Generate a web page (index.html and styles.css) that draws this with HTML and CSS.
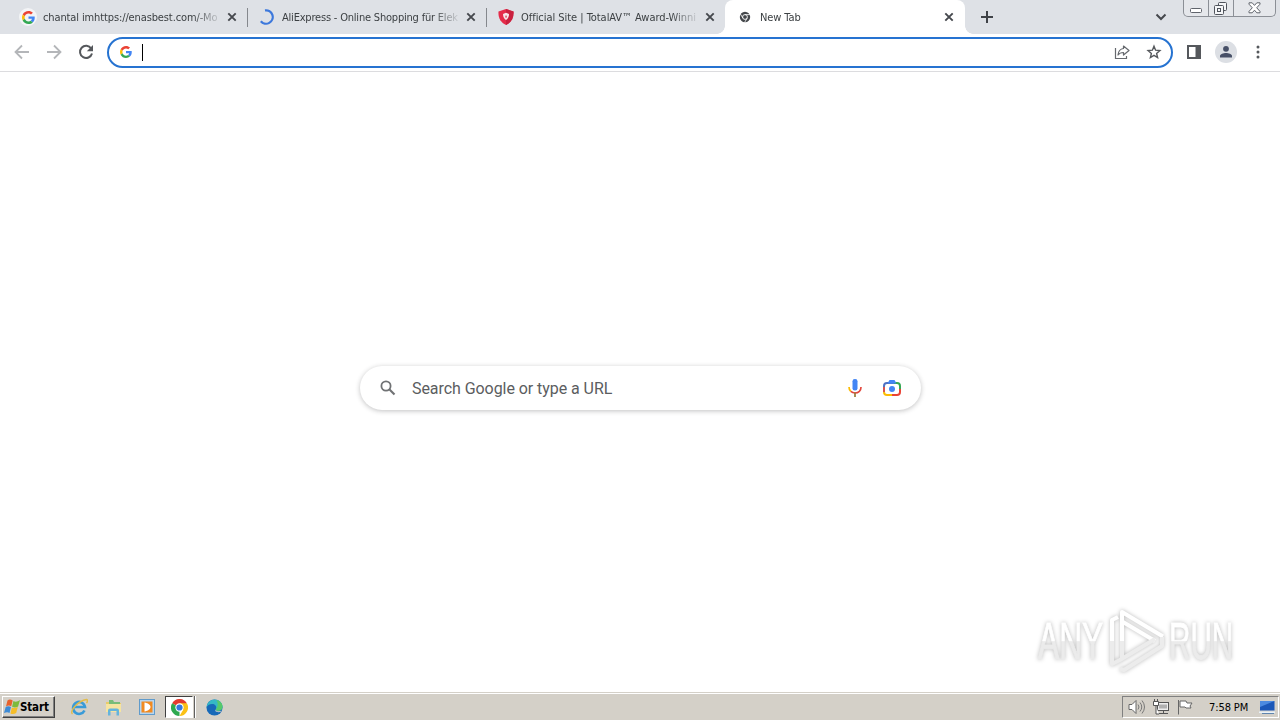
FILE: index.html
```html
<!DOCTYPE html>
<html lang="en">
<head>
  <meta charset="UTF-8">
  <meta name="viewport" content="width=device-width, initial-scale=1.0">
  <title>New Tab</title>
  <link rel="stylesheet" href="styles.css">
</head>
<body>
  <svg class="defs" width="0" height="0">
    <symbol id="google" viewBox="0 0 48 48">
      <path fill="#ea4335" d="M24 9.500c3.500 0 6.700 1.200 9.200 3.600l6.900-6.900C35.900 2.400 30.500 0 24 0 14.600 0 6.500 5.400 2.600 13.200l8 6.200C12.400 13.700 17.700 9.500 24 9.500z"/>
      <path fill="#4285f4" d="M47 24.600c0-1.600-.2-3.100-.4-4.600H24v9h12.900c-.6 3-2.300 5.500-4.800 7.200l7.700 6C44.400 38 47 31.800 47 24.600z"/>
      <path fill="#fbbc05" d="M10.500 28.600c-.5-1.500-.8-3-.8-4.600s.3-3.100.8-4.600l-8-6.200C.9 16.500 0 20.100 0 24s.9 7.500 2.600 10.800z"/>
      <path fill="#34a853" d="M24 48c6.500 0 11.900-2.100 15.900-5.800l-7.700-6c-2.200 1.500-4.900 2.300-8.200 2.300-6.300 0-11.600-4.200-13.500-9.900l-8 6.200C6.500 42.600 14.600 48 24 48z"/>
    </symbol>
    <symbol id="close" viewBox="0 0 10 10">
      <path d="M1.300 1.300l7.400 7.400M8.700 1.300L1.300 8.700" fill="none" stroke="#45484d" stroke-width="1.900"/>
    </symbol>
  </svg>

  <header class="tabs">
    <div class="tab">
      <span class="favicon halo"><svg width="13" height="13"><use href="#google"/></svg></span>
      <span class="title t1">chantal imhttps://enasbest.com/-Mo</span>
      <svg class="close" width="10" height="10"><use href="#close"/></svg>
    </div>
    <div class="tab">
      <span class="favicon"><svg width="16" height="16"><path d="M6 1.400a6.700 6.700 0 1 1-4.200 10.800" fill="none" stroke="#3c78dc" stroke-width="2.200"/></svg></span>
      <span class="title t2">AliExpress - Online Shopping für Elek</span>
      <svg class="close" width="10" height="10"><use href="#close"/></svg>
    </div>
    <div class="tab last">
      <span class="favicon"><svg width="16" height="16" viewBox="0 0 16 16"><path d="M8 0l7.500 2.500c.5 6-2 11-7.500 13.500C2.500 13.500 0 8.500.5 2.500z" fill="#e52b4a"/><path d="M8 0l7.500 2.500c.5 6-2 11-7.500 13.500z" fill="#c9213f"/><path d="M8 3.700l3 1.400c0 2.700-1 4.700-3 6-2-1.300-3-3.300-3-6z" fill="#f7e6ea"/><path d="M7.600 6.500h.9l.3 2H7.300z" fill="#d32544"/></svg></span>
      <span class="title t3">Official Site | TotalAV™ Award-Winni</span>
      <svg class="close" width="10" height="10"><use href="#close"/></svg>
    </div>
    <div class="tab active">
      <span class="favicon"><svg width="12" height="12" viewBox="0 0 12 12"><circle cx="6" cy="6" r="5.200" fill="#44474b"/><circle cx="6" cy="6" r="2.400" fill="#44474b" stroke="#fff" stroke-width=".9"/><path d="M6 3.600h5M3.900 7.200L1.400 3M8.100 7.200L5.600 11.400" stroke="#fff" stroke-width=".8"/></svg></span>
      <span class="title t4">New Tab</span>
      <svg class="close" width="10" height="10"><use href="#close"/></svg>
    </div>
    <svg class="plus" width="12" height="12"><path d="M6 0v12M0 6h12" stroke="#3f4247" stroke-width="2"/></svg>
    <svg class="chevron" width="12" height="8"><path d="M1.500 1.500L6 6l4.500-4.500" fill="none" stroke="#45484d" stroke-width="2"/></svg>
    <div class="window-buttons">
      <span class="min"><svg width="13" height="6"><rect x=".5" y=".5" width="11" height="4" rx="1" fill="#fff" stroke="#60646c"/></svg></span>
      <span class="max"><svg width="14" height="14"><g fill="#f5f6f8" stroke="#50545c"><rect x="4.500" y=".5" width="8" height="8" rx="1"/><rect x=".5" y="3.500" width="9" height="9" rx="1"/><rect x="3.500" y="6.500" width="3" height="3"/></g></svg></span>
      <span class="exit"><svg width="13" height="12"><path d="M1 .8h3.200L6.500 3.400 8.800.8H12v1.400L8.700 5.800 12 9.400v1.400H8.800L6.500 8.200l-2.300 2.600H1V9.400l3.300-3.600L1 2.200z" fill="#fff" stroke="#60646c"/></svg></span>
    </div>
  </header>

  <nav class="toolbar">
    <svg class="nav" width="16" height="16"><path d="M15 8H2M8 1.500L1.500 8 8 14.500" fill="none" stroke="#b4b6b9" stroke-width="1.800"/></svg>
    <svg class="nav" width="16" height="16"><path d="M1 8h13M8 1.500L14.500 8 8 14.500" fill="none" stroke="#b4b6b9" stroke-width="1.800"/></svg>
    <svg class="nav" width="16" height="16"><path d="M13.200 4.500A6.100 6.100 0 1 0 14 9.500" fill="none" stroke="#55585c" stroke-width="2"/><path d="M15 1v6.200H8.800z" fill="#55585c"/></svg>
    <div class="omnibox">
      <svg class="engine" width="12" height="12"><use href="#google"/></svg>
      <span class="caret"></span>
      <svg class="share" width="16" height="16"><path d="M1.500 4v10.500h11V12" fill="none" stroke="#66696e" stroke-width="1.200"/><path d="M9.500 2L15 6.500 9.500 11V8.500C7 8.500 5.200 9.300 4 11c.3-3.500 2-6 5.500-6.500z" fill="none" stroke="#66696e" stroke-width="1.200" stroke-linejoin="round"/></svg>
      <svg class="star" width="16" height="16"><path d="M8 2.200l1.600 4 4.300.4-3.300 2.800 1 4.200L8 11.300l-3.600 2.300 1-4.200-3.300-2.800 4.300-.4z" fill="none" stroke="#55585c" stroke-width="1.400"/></svg>
    </div>
    <svg class="panel" width="14" height="14"><path d="M1 1h12v12H1z" fill="#fff" stroke="#55585c" stroke-width="2"/><path d="M8.500 1H13v12H8.500z" fill="#55585c"/></svg>
    <svg class="avatar" width="22" height="22"><circle cx="11" cy="11" r="11" fill="#dcdfe4"/><circle cx="11" cy="7.800" r="2.900" fill="#475067"/><path d="M5 16.500v-1.500c0-2 3.500-3 6-3s6 1 6 3v1.500z" fill="#475067"/></svg>
    <svg class="menu" width="4" height="14"><g fill="#55585c"><circle cx="2" cy="2" r="1.500"/><circle cx="2" cy="7" r="1.500"/><circle cx="2" cy="12" r="1.500"/></g></svg>
  </nav>

  <main>
    <div class="search">
      <svg class="lens" width="16" height="16"><circle cx="6" cy="6" r="4.600" fill="none" stroke="#707274" stroke-width="1.800"/><path d="M9.300 9.300l5.200 5.200" stroke="#707274" stroke-width="2.100"/></svg>
      <span class="placeholder">Search Google or type a URL</span>
      <svg class="mic" width="14" height="18" viewBox="0 0 14 18"><rect x="4.500" y="0" width="5" height="11.500" rx="2.300" fill="#4285f4"/><g fill="none" stroke-width="1.700"><path d="M1 8c0 2 .6 3.300 1.800 4.400" stroke="#fbbc04"/><path d="M2.800 12.400C4 13.500 5.300 14 7 14c3.500 0 6-2.500 6-6" stroke="#e2463c"/><path d="M7 13.500V18" stroke="#9a7a38"/></g></svg>
      <svg class="camera" width="18" height="16" viewBox="0 0 18 16"><g fill="none" stroke-width="2"><path d="M1 8V6a3 3 0 0 1 3-3h7" stroke="#4e72c4"/><path d="M11 3h3a3 3 0 0 1 3 3v3" stroke="#34a853"/><path d="M17 9v3a3 3 0 0 1-3 3H9" stroke="#ea4335"/><path d="M9 15H4a3 3 0 0 1-3-3" stroke="#fbbc04"/><path d="M1 12V7" stroke="#d9534f"/></g><path d="M5 2.500L6.500 0h5L13 2.500v1H5z" fill="#4285f4"/><circle cx="9" cy="9" r="3" fill="#4285f4"/></svg>
    </div>
    <div class="watermark">
      <span class="word any">ANY</span>
      <svg class="play" width="58" height="64" viewBox="0 0 58 64"><g fill="none" stroke="#fff" stroke-width="4" stroke-linejoin="round"><path d="M14 32V3l41 24.500"/><path d="M15 13l32 19"/><path d="M4 32V11l6-3"/></g><g fill="none" stroke="#ececec" stroke-width="4" stroke-linejoin="round"><path d="M14 32v17"/><path d="M4 32v23l8-4 35-21"/><path d="M12 60l4 1 38-24v-9"/></g></svg>
      <span class="word run">RUN</span>
    </div>
  </main>

  <footer class="taskbar">
    <div class="start">
      <svg width="17" height="16" viewBox="0 0 17 16"><path d="M3.500 1.500C5 .2 6.800.4 8.700 1.400L7.200 7.300C5.500 6.300 4 6.400 2 7.400z" fill="#e8622c"/><path d="M9.400 2c1.800 1 4 .9 6.600-.9l-1.900 6.300c-2 1.400-4.200 1.200-6 .3z" fill="#7dba3c"/><path d="M1.700 8c1.700-1 3.500-1 5.300 0l-1.500 6c-1.700-1-3.300-.9-5.500.1z" fill="#3d8bd6"/><path d="M7.900 8.500c1.800.8 3.700.7 5.900-.5l-1.600 6c-1.900 1.200-3.900 1.300-5.800.5z" fill="#f5bd28"/></svg>
      <span>Start</span>
    </div>
    <div class="apps">
      <span class="app"><svg width="18" height="18" viewBox="0 0 18 18"><path d="M14.500 12.500A6 6 0 1 1 15 9H4" fill="none" stroke="#399bd8" stroke-width="2.600"/><path d="M2.500 16C-1 13 8 3 16.500 1.500c1.500.2 1 2.300 0 3.700" fill="none" stroke="#e3bc49" stroke-width="1.400"/></svg></span>
      <span class="app"><svg width="17" height="17" viewBox="0 0 17 17"><path d="M1 3h5l1 1h9v9H1z" fill="#e8cb6a"/><path d="M4 1h4l1 2h6v4H4z" fill="#79bc78"/><path d="M1 5h15v8H1z" fill="#f6e4a0"/><path d="M3 16.500v-5q0-2 2-2h7q2 0 2 2v5h-2.500V12h-6v4.500z" fill="#65b4dc"/></svg></span>
      <span class="app"><svg width="16" height="16" viewBox="0 0 16 16"><rect x=".5" y=".5" width="15" height="15" fill="#b7d5ee" stroke="#609bcb"/><rect x="2.500" y="2.500" width="11" height="11" fill="#f18a20"/><path d="M5.500 3.500C9 4 11.500 6 11.500 8S9 12 5.500 12.500z" fill="#fff"/></svg></span>
      <span class="app running"><span class="pressed"><svg width="17" height="17" viewBox="0 0 18 18"><path d="M9 9L1.200 4.500A9 9 0 0 1 16.800 4.500z" fill="#e33b2e"/><path d="M9 9V18A9 9 0 0 1 1.200 4.500z" fill="#2da94f"/><path d="M9 4.500h7.800A9 9 0 0 1 9 18l4-7z" fill="#fbc116"/><circle cx="9" cy="9" r="4.400" fill="#fff"/><circle cx="9" cy="9" r="3.300" fill="#3478df"/></svg></span></span>
      <span class="app"><svg width="17" height="17" viewBox="0 0 18 18"><circle cx="9" cy="9" r="8.500" fill="#1769b8"/><path d="M.6 9C1 3.500 5 .5 9 .5c5 0 8.500 3.700 8.500 7.500 0 3-2 4.500-4.500 4.500-2 0-3-.8-2.500-1.700C12 8 9.500 5 6.500 5.200 3.500 5.200 1 7 .6 9z" fill="#35b8c5"/><path d="M11 1c4 .8 6.500 4 6.500 7 0 3-2 4.500-4.500 4.500-2 0-3-.8-2.500-1.700C13 8 13 4 11 1z" fill="#57c96b"/><path d="M10.500 10.800c-.5 1.500 2 3 6.300 1.700-1.500 2-5.300 1.700-7 .3z" fill="#d4d0c8"/></svg></span>
    </div>
    <div class="tray">
      <svg class="sound" width="17" height="16" viewBox="0 0 17 16"><path d="M1 5.500h3l4-4v13l-4-4H1z" fill="#fff" stroke="#666"/><path d="M10 5.500q2 2.500 0 5M12 3.500q3.500 4.500 0 9M14 1.500q5 6.500 0 13" fill="none" stroke="#777"/></svg>
      <svg class="network" width="17" height="16" viewBox="0 0 17 16"><rect x="4.500" y="3.500" width="11" height="8" fill="#eee" stroke="#555"/><path d="M6 5.500h8v4H6z" fill="#b0b0b0"/><path d="M6 14.500h9M10.500 12v3" stroke="#555"/><path d="M.5 2.500h5v4h-5zM1.500 0v2M4.500 0v2M3 7v8h3" fill="#fff" stroke="#555"/></svg>
      <svg class="flag" width="17" height="16" viewBox="0 0 17 16"><path d="M1.500 1v14.500M3 2h6l1 2h5l-2 3 1 2H9L8 8H3z" fill="#fff" stroke="#666"/></svg>
      <span class="clock">7:58 PM</span>
      <svg class="desktop" width="16" height="14" viewBox="0 0 16 14"><path d="M1 1h14.500v9.500H1z" fill="#1b57b8"/><path d="M1 1h14.500L1 7z" fill="#4c8ae0"/><path d="M0 11.500h16V13H0z" fill="#e9f2f9"/><path d="M3 13.500h12" stroke="#6085ad"/></svg>
    </div>
  </footer>
</body>
</html>
```
FILE: styles.css
```css
* {
  box-sizing: border-box;
}
body {
  margin: 0;
  height: 720px;
  display: flex;
  flex-direction: column;
  overflow: hidden;
  background: #fff;
  font-family: "DejaVu Sans Condensed", "DejaVu Sans", sans-serif;
  font-size: 11px;
  color: #3c4043;
}
svg {
  display: block;
  flex: none;
}
.defs {
  position: absolute;
}

/* tab strip */
.tabs {
  display: flex;
  flex: none;
  height: 34px;
  padding-left: 8px;
  background: #dee1e6;
}
.tab {
  position: relative;
  display: flex;
  align-items: center;
  flex: none;
  width: 239px;
  height: 34px;
  padding: 0 10px 0 11px;
}
.tab::after {
  content: "";
  position: absolute;
  right: -1px;
  top: 8px;
  width: 1px;
  height: 19px;
  background: #85888d;
}
.tab.last::after {
  display: none;
}
.tab.active {
  width: 240px;
  background: #fff;
  border-radius: 8px 8px 0 0;
  padding-right: 11px;
}
.tab.active::before,
.tab.active::after {
  content: "";
  position: absolute;
  top: auto;
  bottom: 0;
  width: 8px;
  height: 8px;
}
.tab.active::before {
  left: -8px;
  background: radial-gradient(circle at 0 0, transparent 7.5px, #fff 8px);
}
.tab.active::after {
  right: -8px;
  background: radial-gradient(circle at 100% 0, transparent 7.5px, #fff 8px);
}
.favicon {
  display: flex;
  align-items: center;
  justify-content: center;
  flex: none;
  width: 18px;
  height: 18px;
}
.halo {
  background: #f3f4f6;
  border-radius: 50%;
}
.title {
  flex: none;
  width: 177px;
  margin-left: 6px;
  padding-top: 1px;
  white-space: nowrap;
  line-height: 16px;
  -webkit-mask-image: linear-gradient(to right, #000 150px, transparent 180px);
  mask-image: linear-gradient(to right, #000 150px, transparent 180px);
}
.t1 {
  letter-spacing: -0.12px;
}
.t2 {
  letter-spacing: -0.2px;
}
.t3 {
  letter-spacing: -0.04px;
}
.t4 {
  letter-spacing: -0.1px;
}
.close {
  margin-left: auto;
}
.plus {
  margin: 11px 0 0 16px;
}
.chevron {
  margin: 13px 16px 0 auto;
}
.window-buttons {
  display: flex;
  width: 93px;
  height: 17px;
  margin-right: 4px;
  border: 1px solid #8b8f96;
  border-top: 0;
  border-radius: 0 0 5px 5px;
  background: #e5e7eb;
}
.window-buttons span {
  display: flex;
  justify-content: center;
}
.min {
  width: 25px;
  padding-top: 8px;
  border-right: 1px solid #8b8f96;
}
.max {
  width: 25px;
  padding-top: 2px;
  border-right: 1px solid #8b8f96;
}
.exit {
  flex: 1;
  padding-top: 2px;
}

/* toolbar */
.toolbar {
  display: flex;
  align-items: center;
  flex: none;
  height: 38px;
  padding: 0 20px 1px 14px;
  border-bottom: 1px solid #dcdcdf;
}
.nav {
  margin-right: 16px;
}
.nav + .nav + .nav {
  margin-right: 13px;
}
.omnibox {
  display: flex;
  align-items: center;
  flex: none;
  width: 1066px;
  height: 31px;
  padding: 0 9px 0 11px;
  border: 2px solid #2673d1;
  border-radius: 16px;
}
.caret {
  width: 1px;
  height: 17px;
  margin-left: 10px;
  background: #000;
}
.share {
  margin-left: auto;
}
.star {
  margin-left: 16px;
}
.panel {
  margin-left: 14px;
}
.avatar {
  margin-left: 14px;
}
.menu {
  margin-left: auto;
}

/* page */
main {
  display: flex;
  flex-direction: column;
  flex: 1;
}
.search {
  display: flex;
  align-items: center;
  width: 561px;
  height: 44px;
  margin: 294px 0 0 360px;
  padding: 0 20px;
  border-radius: 22px;
  box-shadow: 0 1px 5px rgba(32, 33, 36, 0.28);
}
.placeholder {
  margin-left: 16px;
  padding-top: 1px;
  font: 16px Roboto, sans-serif;
  line-height: 20px;
  letter-spacing: -0.06px;
  color: #5b5d60;
}
.mic {
  margin-left: auto;
}
.camera {
  margin-left: 21px;
}
.watermark {
  display: flex;
  align-items: center;
  width: 196px;
  height: 64px;
  margin: 199px 0 0 1038px;
  filter: drop-shadow(0 0 2px rgba(0, 0, 0, 0.28));
}
.word {
  flex: none;
  font: 52px "Liberation Sans", sans-serif;
  line-height: 60px;
  white-space: nowrap;
  color: transparent;
  background: linear-gradient(#fff 50%, #ebebeb 51%);
  -webkit-background-clip: text;
  background-clip: text;
  -webkit-text-stroke: 1px transparent;
  transform-origin: left center;
}
.any {
  width: 108px;
  margin-right: -44px;
  transform: scaleX(0.61);
}
.run {
  width: 114px;
  margin-right: -50px;
  transform: scaleX(0.57);
}
.play {
  margin: 0 3px 0 6px;
}

/* taskbar */
.taskbar {
  display: flex;
  flex: none;
  height: 28px;
  border-top: 1px solid #d4d0c8;
  box-shadow: inset 0 1px #fff;
  background: #d4d0c8;
  color: #000;
}
.start {
  display: flex;
  align-items: center;
  width: 53px;
  height: 22px;
  margin: 3px 0 0 2px;
  padding-left: 1px;
  border: 1px solid;
  border-color: #fff #404040 #404040 #fff;
  box-shadow: inset -1px -1px #808080;
  font-size: 11.5px;
  font-weight: bold;
  letter-spacing: -0.15px;
}
.start span {
  margin-left: -1px;
}
.apps {
  display: flex;
  align-items: center;
  margin-left: 7px;
  padding-top: 1px;
}
.app {
  display: flex;
  align-items: center;
  justify-content: center;
  width: 34px;
  height: 24px;
}
.running {
  height: 22px;
  width: 31px;
  justify-content: flex-start;
  margin: 0 1px;
  border-right: 1px solid #fff;
  box-shadow: inset -1px 0 #606060;
}
.pressed {
  display: flex;
  align-items: center;
  justify-content: center;
  width: 28px;
  height: 22px;
  border: 1px solid;
  border-color: #404040 #fff #fff #404040;
  background: #fff;
}
.tray {
  display: flex;
  align-items: center;
  width: 157px;
  height: 22px;
  margin: 3px 1px 0 auto;
  padding-left: 5px;
  border: 1px solid;
  border-color: #808080 #fff #fff #808080;
}
.network {
  margin-left: 8px;
}
.flag {
  margin-left: 7px;
}
.clock {
  width: 40px;
  margin-left: 15px;
  white-space: nowrap;
  letter-spacing: -0.1px;
}
.desktop {
  margin-left: 10px;
}
```
